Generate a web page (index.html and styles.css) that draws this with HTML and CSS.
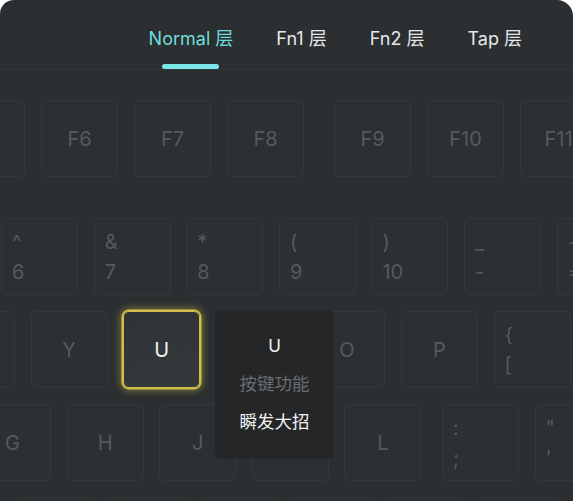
FILE: index.html
```html
<!DOCTYPE html>
<html lang="zh-CN">
<head>
<meta charset="utf-8">
<title>Keymap</title>
<link rel="stylesheet" href="styles.css">
</head>
<body>
<div class="panel">
  <header class="tabs">
    <div class="tab tab-active"><span class="tab-label">Normal 层</span><span class="tab-bar"></span></div>
    <div class="tab"><span class="tab-label">Fn1 层</span></div>
    <div class="tab"><span class="tab-label">Fn2 层</span></div>
    <div class="tab"><span class="tab-label">Tap 层</span></div>
  </header>

  <div class="board">
    <div class="row row-f">
      <div class="key">F5</div>
      <div class="key">F6</div>
      <div class="key">F7</div>
      <div class="key">F8</div>
      <div class="key key-group">F9</div>
      <div class="key">F10</div>
      <div class="key">F11</div>
    </div>

    <div class="row row-num">
      <div class="key key-dual"><span>%</span><span>5</span></div>
      <div class="key key-dual"><span>^</span><span>6</span></div>
      <div class="key key-dual"><span>&amp;</span><span>7</span></div>
      <div class="key key-dual"><span>*</span><span>8</span></div>
      <div class="key key-dual"><span>(</span><span>9</span></div>
      <div class="key key-dual"><span>)</span><span>10</span></div>
      <div class="key key-dual"><span>_</span><span>-</span></div>
      <div class="key key-dual"><span>+</span><span>=</span></div>
    </div>

    <div class="row row-q">
      <div class="key">T</div>
      <div class="key">Y</div>
      <div class="key key-active">U</div>
      <div class="key">I</div>
      <div class="key">O</div>
      <div class="key">P</div>
      <div class="key key-dual"><span>{</span><span>[</span></div>
    </div>

    <div class="row row-a">
      <div class="key">G</div>
      <div class="key">H</div>
      <div class="key">J</div>
      <div class="key">K</div>
      <div class="key">L</div>
      <div class="key key-dual key-shift"><span>:</span><span>;</span></div>
      <div class="key key-dual"><span>"</span><span>'</span></div>
    </div>

    <div class="row row-z">
      <div class="key">V</div>
      <div class="key">B</div>
      <div class="key">N</div>
      <div class="key">M</div>
      <div class="key key-dual"><span>&lt;</span><span>,</span></div>
      <div class="key key-dual"><span>&gt;</span><span>.</span></div>
      <div class="key key-dual"><span>?</span><span>/</span></div>
    </div>
  </div>

  <div class="tooltip">
    <div class="tip-key">U</div>
    <div class="tip-caption">按键功能</div>
    <div class="tip-action">瞬发大招</div>
  </div>
</div>
</body>
</html>
```

FILE: styles.css
```css
html, body {
  margin: 0;
  padding: 0;
  background: #ffffff;
}

body {
  font-family: "Inter", "Noto Sans CJK SC", sans-serif;
}

.panel {
  position: relative;
  width: 573px;
  height: 501px;
  overflow: hidden;
  background: #2b2f31;
  border-radius: 14px 16px 0 0;
}

/* ---------- tabs ---------- */
.tabs {
  display: flex;
  justify-content: flex-end;
  gap: 43px;
  height: 69px;
  padding-right: 51px;
  border-bottom: 1px solid #33373a;
}

.tab {
  display: flex;
  flex-direction: column;
  align-items: center;
}

.tab-label {
  padding-top: 28px;
  line-height: 22px;
  font-size: 18px;
  color: #e6e8e9;
  white-space: nowrap;
}

.tab-active .tab-label {
  color: #6fdcdc;
}

.tab-bar {
  margin-top: 14px;
  width: 57px;
  height: 4.5px;
  border-radius: 3px;
  background: #7ae6e8;
}

/* ---------- keyboard ---------- */
.board {
  display: flex;
  flex-direction: column;
  gap: 16px;
}

.row {
  display: flex;
  gap: 15.6px;
  flex: none;
}

.row-f {
  margin-top: 30px;
  margin-left: -52px;
  gap: 16px;
}

.key-group {
  margin-left: 14px;
}

.row-num {
  margin-top: 25px;
  margin-left: -91.5px;
}

.row-q {
  margin-left: -62px;
}

.row-a {
  margin-left: -26px;
}

.key-shift {
  margin-left: 5px;
}

.row-z {
  margin-left: 16px;
}

.key {
  flex: none;
  box-sizing: border-box;
  width: 77px;
  height: 77px;
  display: flex;
  align-items: center;
  justify-content: center;
  border: 1px solid #35393b;
  border-radius: 6px;
  background: #2c3032;
  color: #565a5d;
  font-size: 20px;
  line-height: 24px;
}

.key-dual {
  flex-direction: column;
  align-items: flex-start;
  justify-content: flex-start;
  gap: 6px;
  padding: 11px 0 0 10px;
}

.key-dual span {
  display: block;
  line-height: 24px;
}

.key-active {
  border: 1px solid #d2be4c;
  background: linear-gradient(160deg, #2f3335 0%, #35393c 100%);
  color: #eef0f0;
  box-shadow: 0 0 0 1.5px #d2be4c, 0 0 7px 3px rgba(210, 190, 76, 0.45);
}

/* ---------- tooltip ---------- */
.tooltip {
  position: absolute;
  left: 215px;
  top: 310px;
  width: 119px;
  height: 149px;
  box-sizing: border-box;
  padding-top: 26px;
  border-radius: 6px;
  background: #242628;
  text-align: center;
  z-index: 2;
}

.tip-key {
  font-size: 17px;
  line-height: 20px;
  color: #f2f3f3;
}

.tip-caption {
  margin-top: 16px;
  font-size: 17.5px;
  line-height: 24px;
  color: #6a6e70;
}

.tip-action {
  margin-top: 14px;
  font-size: 17.5px;
  line-height: 24px;
  color: #f2f3f3;
}
```
